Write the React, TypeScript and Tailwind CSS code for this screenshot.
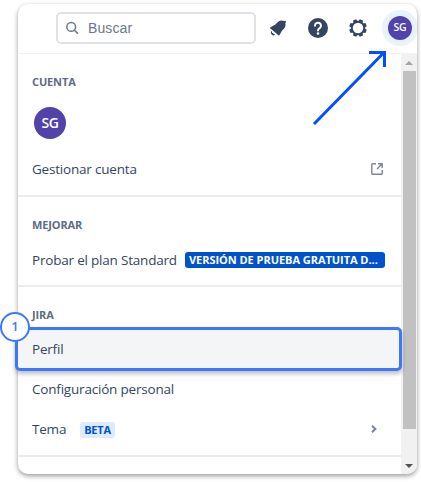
import type { ReactNode } from "react";

function Heading({ children }: { children: ReactNode }) {
  return (
    <h2 className="flex h-4 items-center pl-[14px] text-[11px] font-bold tracking-[-0.12px] whitespace-nowrap text-[#5e6c84]">
      {children}
    </h2>
  );
}

function Row({ children }: { children: ReactNode }) {
  return <div className="flex h-10 items-center pl-[14px] whitespace-nowrap">{children}</div>;
}

function SearchIcon() {
  return (
    <svg width="14" height="14" viewBox="0 0 14 14" fill="none" stroke="#6b778c" strokeWidth="1.5" strokeLinecap="round">
      <circle cx="5.2" cy="5.9" r="4.4" />
      <path d="M8.5 9.2L11.4 12.1" />
    </svg>
  );
}

function BellIcon() {
  return (
    <svg width="18" height="18" viewBox="0 0 18 18" fill="#344563">
      <path d="M1.4 8.2L5.5 6.1C7.2 5.1 8.5 3 10.2 2c1.6-.8 3.5-.8 5 0l1.5-.3.3 1.3-.7.9c.5 1.6.3 3.6-.8 5.1-1 1.4-2.6 2.5-3.5 4.4l-1.4 2.7c-.2.5-.8.5-1.2.1L1.2 9.3c-.4-.4-.3-.9.2-1.1z" />
      <path d="M2.1 11.9L6.1 15.7c-1 .9-2.3.9-3.1.1-1.1-1-1.5-2.6-.9-3.9z" />
      <path d="M3.1 13.1L4.6 14.6" stroke="#fff" strokeWidth="1" />
    </svg>
  );
}

function HelpIcon() {
  return (
    <svg width="20" height="20" viewBox="0 0 20 20">
      <circle cx="10" cy="10" r="10" fill="#344563" />
      <path d="M7 7.8a3 3 0 1 1 4.8 2.3C10.7 11 10 11.2 10 12.6" fill="none" stroke="#fff" strokeWidth="2" strokeLinecap="round" />
      <circle cx="10" cy="15.6" r="1.25" fill="#fff" />
    </svg>
  );
}

const TEETH = [0, 45, 90, 135, 180, 225, 270, 315];

function GearIcon() {
  return (
    <svg width="18" height="18" viewBox="0 0 18 18">
      <circle cx="9" cy="9" r="6.2" fill="none" stroke="#344563" strokeWidth="1.9" />
      {TEETH.map((angle) => (
        <path key={angle} d="M6.7 2.8L7.3.2h3.4l.6 2.6z" fill="#344563" transform={`rotate(${angle + 22.5} 9 9)`} />
      ))}
    </svg>
  );
}

function ExternalIcon() {
  return (
    <svg width="12" height="12" viewBox="0 0 12 12" fill="none" stroke="#7a869a" strokeWidth="1.4">
      <path d="M5 .8H1.5a.7.7 0 0 0-.7.7v9a.7.7 0 0 0 .7.7h9a.7.7 0 0 0 .7-.7V7M7 .8h4.2V5M11 1L6 6" />
    </svg>
  );
}

export default function App() {
  return (
    <div className="relative h-[482px] w-[421px] overflow-hidden bg-white pt-1 pl-[18px] font-['Open_Sans','Noto_Sans',sans-serif]">
      <div className="flex h-[470px] w-[399px] flex-col overflow-hidden rounded-[10px] bg-white shadow-[0_2px_5px_rgba(0,0,0,0.4)]">
        <header className="flex h-[50px] shrink-0 items-center border-b border-[#f1f2f4] pl-[38px]">
          <div className="-mt-px flex h-8 w-[200px] shrink-0 items-center rounded-[5px] border-2 border-[#dfe1e6] pl-2">
            <SearchIcon />
            <span className="ml-[8px] font-['Liberation_Sans',sans-serif] text-[14px] leading-5 tracking-[0.1px] text-[#6b778c]">Buscar</span>
          </div>
          <div className="-mt-px ml-[13px] shrink-0"><BellIcon /></div>
          <div className="-mt-px ml-[21px] shrink-0"><HelpIcon /></div>
          <div className="-mt-[2px] ml-[21px] shrink-0"><GearIcon /></div>
          <div className="-mt-px ml-[15px] flex size-9 shrink-0 items-center justify-center rounded-full bg-[#e9f2ff]">
            <div className="flex size-6 items-center justify-center rounded-full bg-[#5243aa] text-[10.5px] font-semibold tracking-[-0.2px] text-white">SG</div>
          </div>
        </header>
        <div className="flex min-h-0 flex-1">
          <main className="w-[383px] shrink-0 text-[13.5px] tracking-[-0.2px] text-[#344563]">
            <section className="h-[143px] border-b-2 border-[#ebecf0] pt-5 pr-4">
              <Heading>CUENTA</Heading>
              <div className="mt-[17px] mb-[10px] ml-4 flex size-8 items-center justify-center rounded-full bg-[#5243aa] pb-px text-[14px] font-semibold tracking-[-0.4px] text-white">SG</div>
              <Row>
                <span>Gestionar cuenta</span>
                <span className="mr-[2px] ml-auto"><ExternalIcon /></span>
              </Row>
            </section>
            <section className="h-[90px] border-b-2 border-[#ebecf0] pt-5 pr-4">
              <Heading>MEJORAR</Heading>
              <div className="mt-[7px]">
                <Row>
                  <span className="w-[153px]">Probar el plan Standard</span>
                  <span className="h-4 w-[200px] rounded-[3px] bg-[#0052cc] px-1 text-[11px] leading-4 font-bold tracking-[-0.04px] text-white">VERSIÓN DE PRUEBA GRATUITA D...</span>
                </Row>
              </div>
            </section>
            <section className="h-[170px] border-b-2 border-[#ebecf0] pt-5">
              <Heading>JIRA</Heading>
              <div className="mt-[46px] pr-6">
                <Row>Configuración personal</Row>
                <Row>
                  <span className="w-12">Tema</span>
                  <span className="mt-px h-4 w-[35px] rounded-[3px] bg-[#deebff] text-center text-[11px] leading-4 font-bold tracking-[-0.2px] text-[#0052cc]">BETA</span>
                  <svg className="ml-auto" width="6" height="8" viewBox="0 0 6 8" fill="none" stroke="#7a869a" strokeWidth="2"><path d="M1 .7L4.4 4L1 7.3" /></svg>
                </Row>
              </div>
            </section>
          </main>
          <aside className="flex w-4 shrink-0 flex-col items-center bg-[#f1f1f1]">
            <div className="flex h-[17px] items-center"><svg width="8" height="4" viewBox="0 0 8 4"><path d="M4 0L8 4H0z" fill="#a3a3a3" /></svg></div>
            <div className="h-[358px] w-[13px] bg-[#c1c1c1]" />
            <div className="mt-auto flex h-[17px] items-center"><svg width="8" height="4" viewBox="0 0 8 4"><path d="M0 0H8L4 4z" fill="#505050" /></svg></div>
          </aside>
        </div>
      </div>
      <div className="absolute top-[327px] left-[15px] flex h-[44px] w-[387px] items-center rounded-[5px] border-[3px] border-[#3b78ff] bg-[#f4f5f7] pl-[14px] text-[13.5px] tracking-[-0.2px] text-[#344563] shadow-[0_3px_4px_rgba(0,0,0,0.25)]">Perfil</div>
      <div className="absolute top-[312px] left-0 flex size-[30px] items-center justify-center rounded-full border-2 border-[#3b78ff] bg-white text-[13px] font-semibold text-[#3b78ff]">1</div>
      <svg className="absolute top-[46px] left-[310px]" width="80" height="82" viewBox="0 0 80 82" fill="none" stroke="#0050ff" strokeWidth="3"><path d="M4 78L74 6.5M59 6.5H74.5V21" /></svg>
    </div>
  );
}
